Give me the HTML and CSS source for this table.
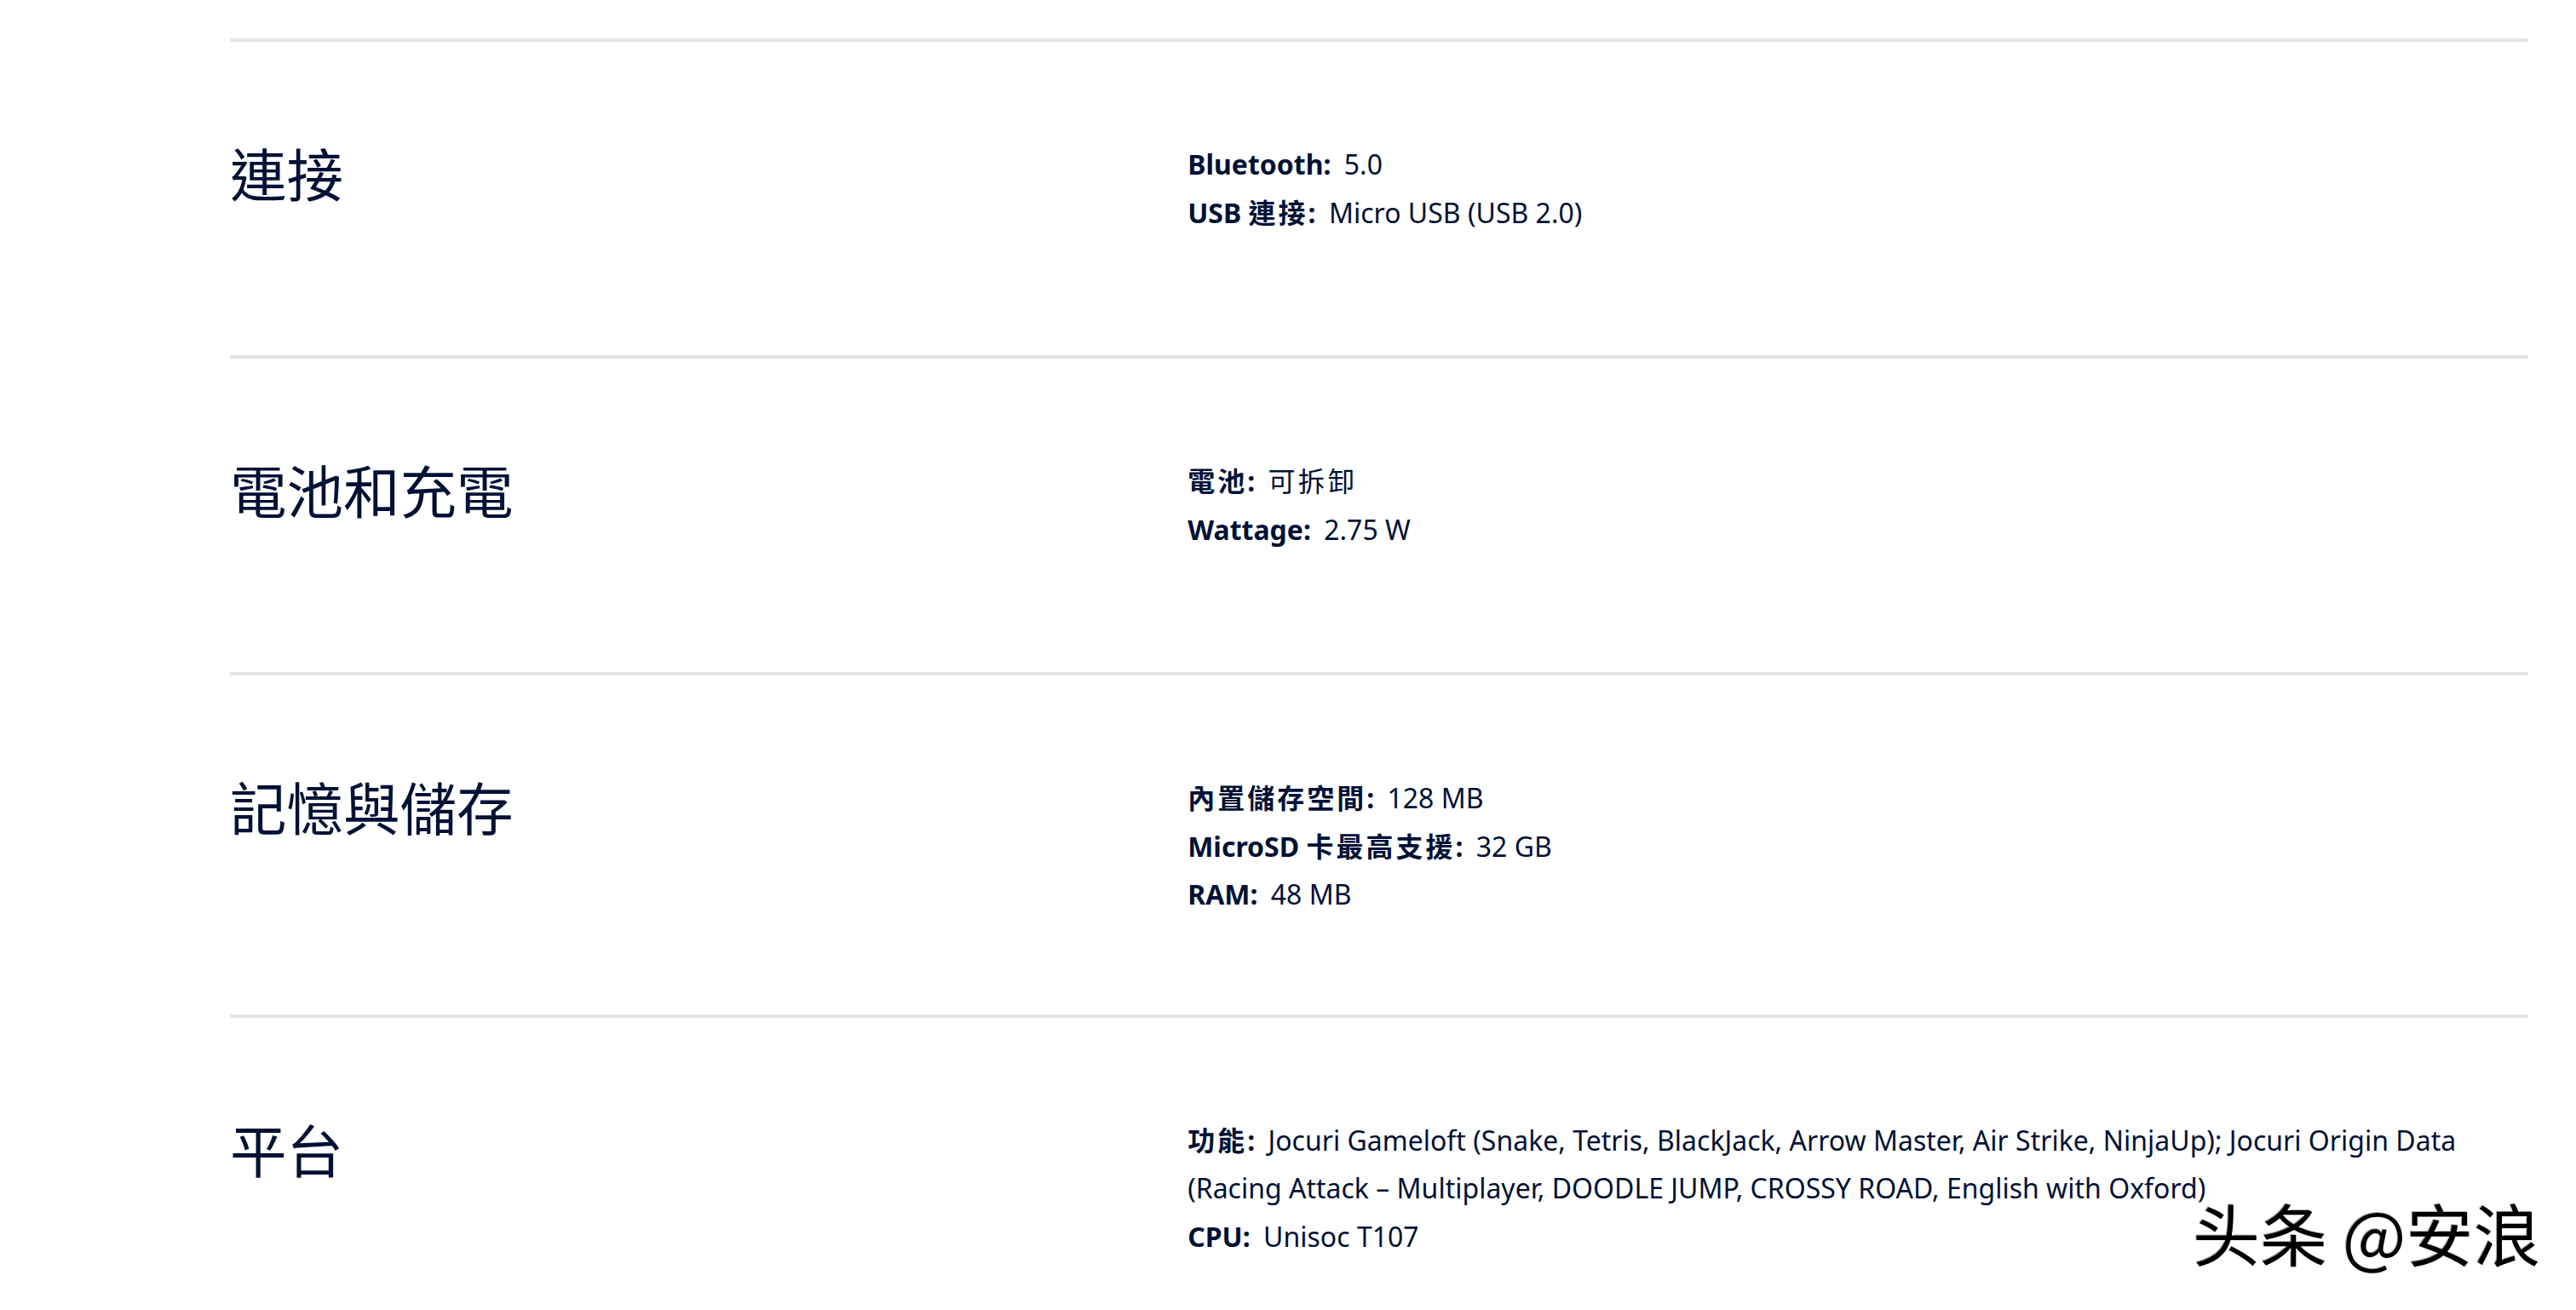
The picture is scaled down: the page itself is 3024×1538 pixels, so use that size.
FILE: index.html
```html
<!DOCTYPE html>
<html lang="zh-Hant">
<head>
<meta charset="utf-8">
<title>規格</title>
<link rel="stylesheet" href="styles.css">
</head>
<body>
<main class="specs">
  <section class="row">
    <h2 class="row-title">連接</h2>
    <div class="details">
      <p class="item"><b class="label">Bluetooth:</b> <span>5.0</span></p>
      <p class="item"><b class="label">USB <span class="cjk">連接</span>:</b> <span>Micro USB (USB 2.0)</span></p>
    </div>
  </section>
  <section class="row">
    <h2 class="row-title">電池和充電</h2>
    <div class="details">
      <p class="item"><b class="label"><span class="cjk">電池</span>:</b> <span class="cjk">可拆卸</span></p>
      <p class="item"><b class="label">Wattage:</b> <span>2.75 W</span></p>
    </div>
  </section>
  <section class="row">
    <h2 class="row-title">記憶與儲存</h2>
    <div class="details">
      <p class="item"><b class="label"><span class="cjk">內置儲存空間</span>:</b> <span>128 MB</span></p>
      <p class="item"><b class="label">MicroSD <span class="cjk">卡最高支援</span>:</b> <span>32 GB</span></p>
      <p class="item"><b class="label">RAM:</b> <span>48 MB</span></p>
    </div>
  </section>
  <section class="row">
    <h2 class="row-title">平台</h2>
    <div class="details">
      <p class="item"><b class="label"><span class="cjk">功能</span>:</b> <span>Jocuri Gameloft (Snake, Tetris, BlackJack, Arrow Master, Air Strike, NinjaUp); Jocuri Origin Data (Racing Attack – Multiplayer, DOODLE JUMP, CROSSY ROAD, English with Oxford)</span></p>
      <p class="item"><b class="label">CPU:</b> <span>Unisoc T107</span></p>
    </div>
  </section>
</main>
<div class="watermark">头条 @安浪</div>
</body>
</html>
```
FILE: styles.css
```css
html, body {
  margin: 0;
  padding: 0;
  background: #ffffff;
}

body {
  color: #001135;
  font-family: "Noto Sans", "Noto Sans CJK TC", sans-serif;
  overflow: hidden;
}

.specs {
  margin: 0 56px 0 270px;
  padding-top: 45px;
}

.row {
  display: grid;
  grid-template-columns: 5fr 7fr;
  border-top: 4px solid #e5e5e5;
  padding: 116px 0 112px;
}

.row-title {
  margin: 4px 0 0;
  font-family: "Noto Sans CJK TC", "Noto Sans", sans-serif;
  font-weight: 400;
  font-size: 66.5px;
  line-height: 66px;
  color: #001135;
}

.details {
  min-height: 140px;
  font-size: 32px;
  line-height: 56.6px;
}

.item {
  margin: 0;
}

.item > *,
.item .cjk {
  line-height: 1;
}

.label {
  font-weight: 700;
  margin-right: 7px;
}

.cjk {
  font-family: "Noto Sans CJK TC", sans-serif;
  letter-spacing: 3px;
}

.watermark {
  position: absolute;
  left: 2574px;
  top: 1407px;
  font-family: "Noto Sans CJK SC", sans-serif;
  font-size: 79px;
  line-height: 1;
  font-weight: 400;
  color: #000000;
  white-space: nowrap;
  text-shadow: 2px 2px 0 #ffffff, -1px -1px 0 rgba(0, 0, 0, 0.35);
}
```
